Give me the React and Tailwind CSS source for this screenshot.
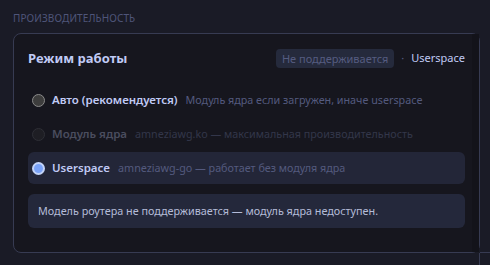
import React from "react";

const rows = [
  {
    label: "Авто (рекомендуется)",
    desc: "Модуль ядра если загружен, иначе userspace",
    state: "idle",
  },
  {
    label: "Модуль ядра",
    desc: "amneziawg.ko — максимальная производительность",
    state: "disabled",
  },
  {
    label: "Userspace",
    desc: "amneziawg-go — работает без модуля ядра",
    state: "checked",
  },
];

function Radio({ state }) {
  if (state === "checked") {
    return (
      <span className="w-[13px] h-[13px] rounded-full bg-[#7aa2f7] border-2 border-[#c3d3f7] shrink-0" />
    );
  }
  if (state === "disabled") {
    return (
      <span className="w-[13px] h-[13px] rounded-full bg-[#1e1e24] border border-[#2e2f36] shrink-0" />
    );
  }
  return (
    <span className="w-[13px] h-[13px] rounded-full bg-[#3d3d3d] border border-[#8a8a8a] shrink-0" />
  );
}

export default function App() {
  return (
    <div
      className="relative w-[490px] h-[265px] overflow-hidden bg-[#1a1b26] pl-[13px] pt-[11px]"
      style={{ fontFamily: '"Noto Sans", "Open Sans", sans-serif' }}
    >
      <div className="text-[10px] leading-[14px] uppercase text-[#4f5579] tracking-[0.1px]">
        Производительность
      </div>

      <div className="relative mt-[8px] w-[467px] h-[220px] rounded-[8px] border border-[#373b52] bg-[#16161e] flex">
        <div className="flex-1 pl-[14px] pr-[7px] pt-[15px]">
          {/* header */}
          <div className="flex items-center justify-between h-[19px]">
            <h2 className="text-[13px] font-bold text-[#c0caf5] leading-none">
              Режим работы
            </h2>
            <div className="flex items-center text-[11px]">
              <span className="bg-[#252a3c] text-[#555c80] rounded-[4px] px-[6px] h-[19px] leading-[19px]">
                Не поддерживается
              </span>
              <span className="text-[#555c80] mx-[7px]">·</span>
              <span className="text-[#c0caf5]">Userspace</span>
            </div>
          </div>

          {/* radios */}
          <div className="mt-[16px] flex flex-col gap-[2px]">
            {rows.map((r) => (
              <div
                key={r.label}
                className={
                  "flex items-center h-[32px] px-[4px] rounded-[6px] " +
                  (r.state === "checked" ? "bg-[#232638]" : "")
                }
              >
                <Radio state={r.state} />
                <span
                  className={
                    "ml-[7px] text-[11.5px] font-semibold " +
                    (r.state === "disabled" ? "text-[#4a4d5e]" : "text-[#c0caf5]")
                  }
                >
                  {r.label}
                </span>
                <span
                  className={
                    "ml-[8px] text-[10.75px] " +
                    (r.state === "disabled" ? "text-[#33364a]" : "text-[#545a7e]")
                  }
                >
                  {r.desc}
                </span>
              </div>
            ))}
          </div>

          {/* info */}
          <div className="mt-[10px] h-[34px] rounded-[6px] bg-[#24283b] px-[10px] flex items-center text-[10.8px] text-[#b4bcd8]">
            Модель роутера не поддерживается — модуль ядра недоступен.
          </div>
        </div>
        <div className="w-[7px] bg-[#13131a]" />
      </div>

      {/* edge lines running past the card */}
      <div className="absolute left-[480px] top-[252px] w-[10px] h-px bg-[#373b52]" />
      <div className="absolute left-[479px] top-[253px] w-px h-[12px] bg-[#373b52]" />
    </div>
  );
}
